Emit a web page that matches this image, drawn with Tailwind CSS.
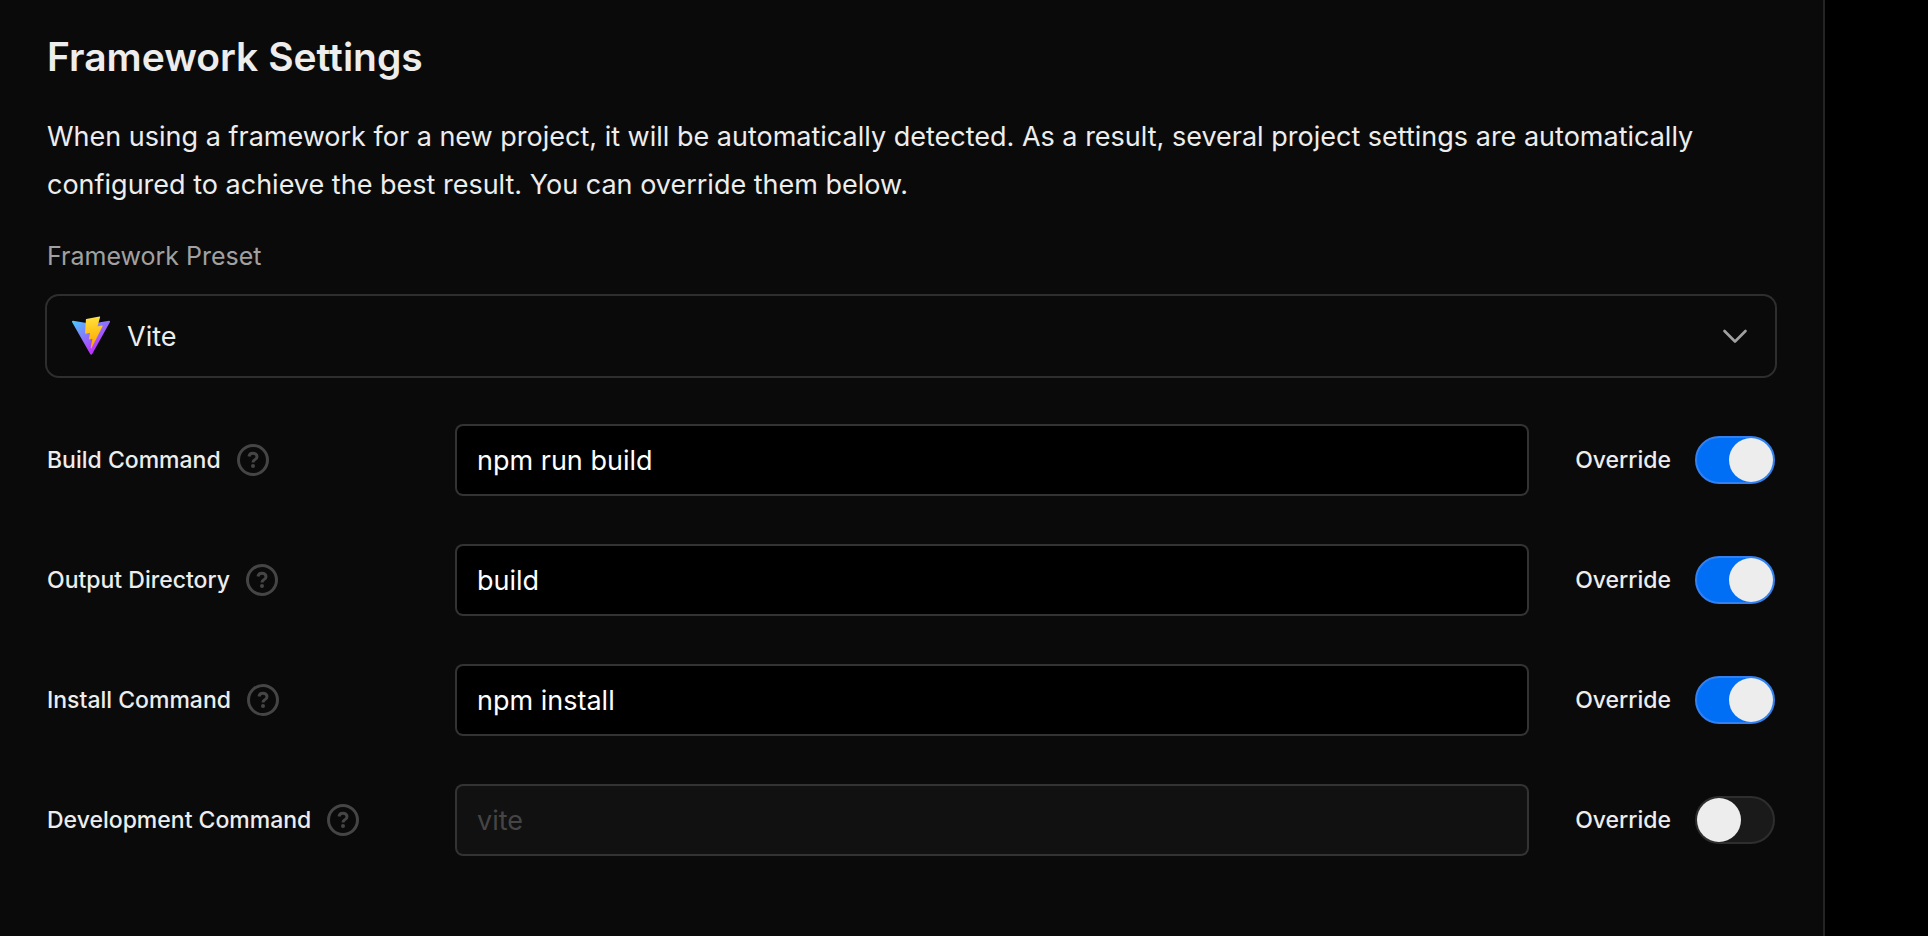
<!doctype html>
<html lang="en">
<head>
  <meta charset="UTF-8" />
  <meta name="viewport" content="width=device-width, initial-scale=1.0" />
  <title>Framework Settings</title>
  <script src="https://cdn.jsdelivr.net/npm/@tailwindcss/browser@4"></script>
</head>
<body class="min-h-screen bg-black pr-[103px] font-['Inter',sans-serif] text-[#ededed]">

  <main class="min-h-screen border-r-2 border-[#242424] bg-[#0a0a0a] pt-[33px] pr-12 pb-16 pl-[47px]">
    <h1 class="text-[39px] leading-12 font-semibold">Framework Settings</h1>
    <p class="mt-8 text-[27px] leading-12">When using a framework for a new project, it will be automatically detected. As a result, several project settings are automatically configured to achieve the best result. You can override them below.</p>

    <!-- Preset -->
    <label for="preset" class="mt-[31px] block text-[25px] leading-8 text-[#a1a1a1]">Framework Preset</label>
    <div class="relative mt-6">
      <select id="preset" class="h-20 w-full appearance-none rounded-xl bg-[#0a0a0a] pt-0.5 pl-20 text-[27px] ring-2 ring-[#2e2e2e]">
        <option>Vite</option>
      </select>
      <svg class="pointer-events-none absolute top-5 left-6 size-10" viewBox="0 0 410 404" fill="none">
        <path d="M399.641 59.5246L215.643 388.545C211.844 395.338 202.084 395.378 198.228 388.618L10.5817 59.5563C6.38087 52.1896 12.6802 43.2665 21.0281 44.7586L205.223 77.6824C206.398 77.8924 207.601 77.8904 208.776 77.6763L389.119 44.8058C397.439 43.2894 403.768 52.1434 399.641 59.5246Z" fill="url(#va)" />
        <path d="M292.965 1.5744L156.801 28.2552C154.563 28.6937 152.906 30.5903 152.771 32.8664L144.395 174.33C144.198 177.662 147.258 180.248 150.51 179.498L188.42 170.749C191.967 169.931 195.172 173.055 194.443 176.622L183.18 231.775C182.422 235.487 185.907 238.661 189.532 237.56L212.947 230.446C216.577 229.344 220.065 232.527 219.297 236.242L201.398 322.875C200.278 328.294 207.486 331.249 210.492 326.603L212.5 323.5L323.454 102.072C325.312 98.3645 322.108 94.137 318.036 94.9228L279.014 102.454C275.347 103.161 272.227 99.746 273.262 96.1583L298.731 7.86689C299.767 4.27314 296.636 0.855181 292.965 1.5744Z" fill="url(#vb)" />
        <defs>
          <linearGradient id="va" x1="6" y1="33" x2="235" y2="344" gradientUnits="userSpaceOnUse"><stop stop-color="#41D1FF" /><stop offset="1" stop-color="#BD34FE" /></linearGradient>
          <linearGradient id="vb" x1="194.651" y1="8.818" x2="236.076" y2="292.989" gradientUnits="userSpaceOnUse"><stop stop-color="#FFEA83" /><stop offset=".0833" stop-color="#FFDD35" /><stop offset="1" stop-color="#FFA800" /></linearGradient>
        </defs>
      </svg>
      <svg class="pointer-events-none absolute top-6 right-6 size-8" viewBox="0 0 32 32" fill="none" stroke="#a1a1a1" stroke-width="2.6" stroke-linecap="round" stroke-linejoin="round">
        <path d="M5.500 11L16 21.500 26.500 11" />
      </svg>
    </div>

    <!-- Commands -->
    <div class="mt-[50px] flex flex-col gap-[52px]">
      <div class="flex items-center">
        <div class="flex w-[410px] shrink-0 items-center gap-4">
          <label for="build" class="text-[23px] leading-8 font-medium">Build Command</label>
          <button type="button" aria-label="About the build command" class="text-[#454545]">
            <svg class="size-8" viewBox="0 0 32 32" fill="none" stroke="currentColor" stroke-width="3"><circle cx="16" cy="16" r="14.5" /><path d="M12 12.5c.3-2 1.800-3.200 4-3.200 2.300 0 4 1.400 4 3.400 0 1.600-.9 2.400-2.200 3.100-1.200.7-1.800 1.200-1.800 2.700" /><circle cx="16" cy="22" r="2" fill="currentColor" stroke="none" /></svg>
          </button>
        </div>
        <input id="build" type="text" value="npm run build" class="h-[68px] min-w-0 flex-1 rounded-md bg-black px-5 text-[27px] text-white ring-2 ring-[#333]" />
        <label class="ml-12 flex items-center gap-6 text-[23px] leading-8 font-medium">
          Override
          <input type="checkbox" checked class="h-12 w-20 appearance-none rounded-full border-2 border-[#2e2e2e] bg-[#1a1a1a] before:block before:size-11 before:rounded-full before:bg-[#ededed] checked:border-[#3381f0] checked:bg-[#006ff5] checked:before:translate-x-8" />
        </label>
      </div>
      <div class="flex items-center">
        <div class="flex w-[410px] shrink-0 items-center gap-4">
          <label for="output" class="text-[23px] leading-8 font-medium">Output Directory</label>
          <button type="button" aria-label="About the output directory" class="text-[#454545]">
            <svg class="size-8" viewBox="0 0 32 32" fill="none" stroke="currentColor" stroke-width="3"><circle cx="16" cy="16" r="14.5" /><path d="M12 12.5c.3-2 1.800-3.200 4-3.200 2.300 0 4 1.400 4 3.400 0 1.600-.9 2.400-2.200 3.100-1.200.7-1.800 1.200-1.800 2.700" /><circle cx="16" cy="22" r="2" fill="currentColor" stroke="none" /></svg>
          </button>
        </div>
        <input id="output" type="text" value="build" class="h-[68px] min-w-0 flex-1 rounded-md bg-black px-5 text-[27px] text-white ring-2 ring-[#333]" />
        <label class="ml-12 flex items-center gap-6 text-[23px] leading-8 font-medium">
          Override
          <input type="checkbox" checked class="h-12 w-20 appearance-none rounded-full border-2 border-[#2e2e2e] bg-[#1a1a1a] before:block before:size-11 before:rounded-full before:bg-[#ededed] checked:border-[#3381f0] checked:bg-[#006ff5] checked:before:translate-x-8" />
        </label>
      </div>
      <div class="flex items-center">
        <div class="flex w-[410px] shrink-0 items-center gap-4">
          <label for="install" class="text-[23px] leading-8 font-medium">Install Command</label>
          <button type="button" aria-label="About the install command" class="text-[#454545]">
            <svg class="size-8" viewBox="0 0 32 32" fill="none" stroke="currentColor" stroke-width="3"><circle cx="16" cy="16" r="14.5" /><path d="M12 12.5c.3-2 1.800-3.200 4-3.200 2.300 0 4 1.400 4 3.400 0 1.600-.9 2.400-2.200 3.100-1.200.7-1.800 1.200-1.800 2.700" /><circle cx="16" cy="22" r="2" fill="currentColor" stroke="none" /></svg>
          </button>
        </div>
        <input id="install" type="text" value="npm install" class="h-[68px] min-w-0 flex-1 rounded-md bg-black px-5 text-[27px] text-white ring-2 ring-[#333]" />
        <label class="ml-12 flex items-center gap-6 text-[23px] leading-8 font-medium">
          Override
          <input type="checkbox" checked class="h-12 w-20 appearance-none rounded-full border-2 border-[#2e2e2e] bg-[#1a1a1a] before:block before:size-11 before:rounded-full before:bg-[#ededed] checked:border-[#3381f0] checked:bg-[#006ff5] checked:before:translate-x-8" />
        </label>
      </div>
      <div class="flex items-center">
        <div class="flex w-[410px] shrink-0 items-center gap-4">
          <label for="dev" class="text-[23px] leading-8 font-medium">Development Command</label>
          <button type="button" aria-label="About the development command" class="text-[#454545]">
            <svg class="size-8" viewBox="0 0 32 32" fill="none" stroke="currentColor" stroke-width="3"><circle cx="16" cy="16" r="14.5" /><path d="M12 12.5c.3-2 1.800-3.200 4-3.200 2.300 0 4 1.400 4 3.400 0 1.600-.9 2.400-2.200 3.100-1.200.7-1.800 1.200-1.800 2.700" /><circle cx="16" cy="22" r="2" fill="currentColor" stroke="none" /></svg>
          </button>
        </div>
        <input id="dev" type="text" placeholder="vite" disabled class="h-[68px] min-w-0 flex-1 rounded-md bg-[#111] px-5 text-[27px] ring-2 ring-[#333] placeholder:text-[#454545]" />
        <label class="ml-12 flex items-center gap-6 text-[23px] leading-8 font-medium">
          Override
          <input type="checkbox" class="h-12 w-20 appearance-none rounded-full border-2 border-[#2e2e2e] bg-[#1a1a1a] before:block before:size-11 before:rounded-full before:bg-[#ededed] checked:border-[#3381f0] checked:bg-[#006ff5] checked:before:translate-x-8" />
        </label>
      </div>
    </div>
  </main>

</body>
</html>
